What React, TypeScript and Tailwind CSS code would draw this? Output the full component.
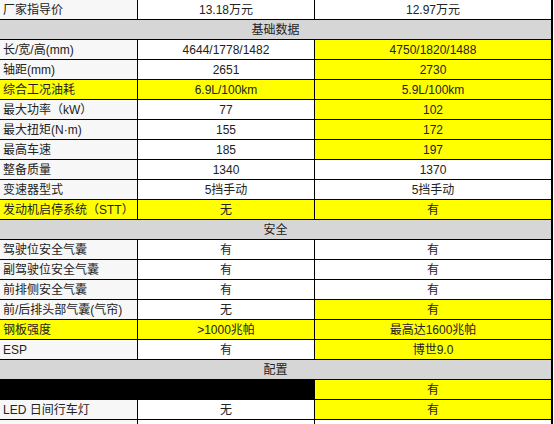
type Row =
  | { kind: 'head'; title: string }
  | { kind: 'data'; label: string; a: string; b: string; ya?: boolean; yb?: boolean; yl?: boolean; black?: boolean }

const rows: Row[] = [
  { kind: 'data', label: '厂家指导价', a: '13.18万元', b: '12.97万元' },
  { kind: 'head', title: '基础数据' },
  { kind: 'data', label: '长/宽/高(mm)', a: '4644/1778/1482', b: '4750/1820/1488', yb: true },
  { kind: 'data', label: '轴距(mm)', a: '2651', b: '2730', yb: true },
  { kind: 'data', label: '综合工况油耗', a: '6.9L/100km', b: '5.9L/100km', yl: true, ya: true, yb: true },
  { kind: 'data', label: '最大功率（kW）', a: '77', b: '102', yb: true },
  { kind: 'data', label: '最大扭矩(N·m)', a: '155', b: '172', yb: true },
  { kind: 'data', label: '最高车速', a: '185', b: '197', yb: true },
  { kind: 'data', label: '整备质量', a: '1340', b: '1370' },
  { kind: 'data', label: '变速器型式', a: '5挡手动', b: '5挡手动' },
  { kind: 'data', label: '发动机启停系统（STT）', a: '无', b: '有', yl: true, ya: true, yb: true },
  { kind: 'head', title: '安全' },
  { kind: 'data', label: '驾驶位安全气囊', a: '有', b: '有' },
  { kind: 'data', label: '副驾驶位安全气囊', a: '有', b: '有' },
  { kind: 'data', label: '前排侧安全气囊', a: '有', b: '有' },
  { kind: 'data', label: '前/后排头部气囊(气帘)', a: '无', b: '有', yb: true },
  { kind: 'data', label: '钢板强度', a: '>1000兆帕', b: '最高达1600兆帕', yl: true, ya: true, yb: true },
  { kind: 'data', label: 'ESP', a: '有', b: '博世9.0', yb: true },
  { kind: 'head', title: '配置' },
  { kind: 'data', label: '', a: '', b: '有', black: true, yb: true },
  { kind: 'data', label: 'LED 日间行车灯', a: '无', b: '有', yb: true },
  { kind: 'data', label: '', a: '', b: '' },
]

function App() {
  return (
    <div
      className="w-[554px] h-[424px] overflow-hidden bg-white text-[12px] text-[#222]"
      style={{ fontFamily: '"Liberation Sans", "Noto Sans CJK SC", sans-serif' }}
    >
      <div className="w-[553px] border-r-2 border-black">
        {rows.map((r, i) =>
          r.kind === 'head' ? (
            <div key={i} className="h-[20px] bg-[#d6d6d6] border-b border-black flex items-center justify-center leading-none">
              {r.title}
            </div>
          ) : (
            <div key={i} className="h-[20px] grid grid-cols-[138px_177px_1fr] border-b border-black leading-none">
              <div
                className={`border-r border-black flex items-center pl-[3px] whitespace-nowrap ${
                  r.black ? 'bg-black' : r.yl ? 'bg-[#ffff00]' : 'bg-[#f7f7f7]'
                }`}
              >
                {r.label}
              </div>
              <div
                className={`border-r border-black flex items-center justify-center ${
                  r.black ? 'bg-black' : r.ya ? 'bg-[#ffff00]' : 'bg-white'
                }`}
              >
                {r.a}
              </div>
              <div className={`flex items-center justify-center ${r.yb ? 'bg-[#ffff00]' : 'bg-white'}`}>{r.b}</div>
            </div>
          )
        )}
      </div>
    </div>
  )
}

export default App
